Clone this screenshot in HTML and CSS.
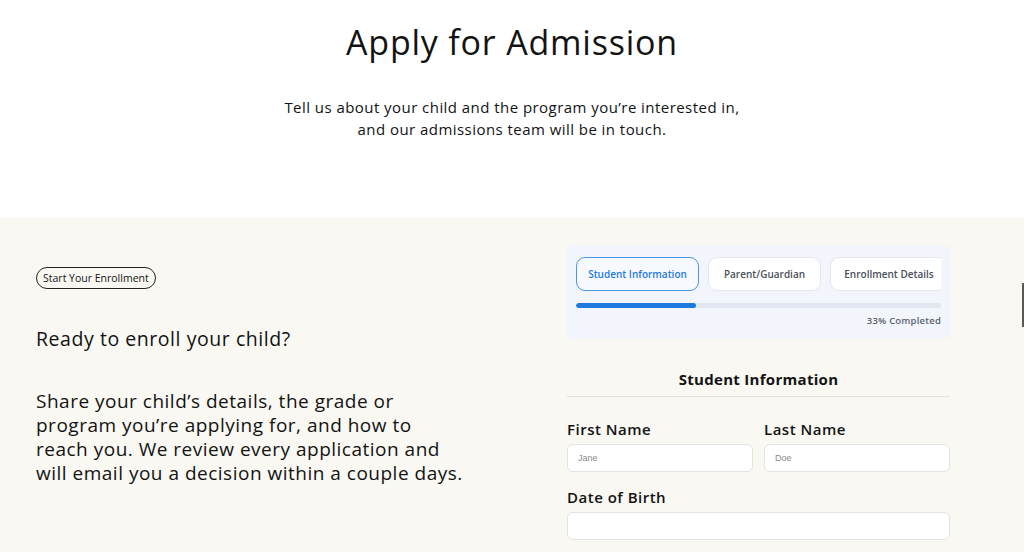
FILE: index.html
```html
<!DOCTYPE html>
<html>
<head>
<meta charset="utf-8">
<link rel="stylesheet" href="styles.css">
</head>
<body>
<header class="hero">
  <h1 class="hero-title">Apply for Admission</h1>
  <p class="hero-sub">Tell us about your child and the program you’re interested in,<br>and our admissions team will be in touch.</p>
</header>
<section class="enroll">
  <div class="intro">
    <span class="pill">Start Your Enrollment</span>
    <h2 class="intro-title">Ready to enroll your child?</h2>
    <p class="intro-text">Share your child’s details, the grade or program you’re applying for, and how to reach you. We review every application and will email you a decision within a couple days.</p>
  </div>
  <div class="form-col">
    <div class="steps">
      <div class="tabs">
        <button class="tab active">Student Information</button>
        <button class="tab">Parent/Guardian</button>
        <button class="tab">Enrollment Details</button>
      </div>
      <div class="progress"><div class="progress-fill" style="width:33%"></div></div>
      <div class="progress-label">33% Completed</div>
    </div>
    <h3 class="form-title">Student Information</h3>
    <div class="row">
      <label class="field">
        <span class="label">First Name</span>
        <input class="input" placeholder="Jane">
      </label>
      <label class="field">
        <span class="label">Last Name</span>
        <input class="input" placeholder="Doe">
      </label>
    </div>
    <label class="field">
      <span class="label">Date of Birth</span>
      <input class="input">
    </label>
  </div>
  <div class="edge-tab"></div>
</section>
</body>
</html>
```
FILE: styles.css
```css
* { box-sizing: border-box; }
html, body { margin: 0; padding: 0; }
body {
  font-family: "Open Sans", "Noto Sans", sans-serif;
  color: #131313;
  background: #ffffff;
  overflow: hidden;
  width: 1024px;
  height: 552px;
}
.hero {
  height: 218px;
  text-align: center;
  padding-top: 20px;
}
.hero-title {
  margin: 0;
  font-size: 34px;
  font-weight: 400;
  line-height: 44px;
  letter-spacing: 0.8px;
}
.hero-sub {
  margin: 32px 0 0;
  font-size: 15px;
  line-height: 22px;
  letter-spacing: 0.45px;
}
.enroll {
  position: relative;
  background: #f9f8f2;
  height: 334px;
  display: flex;
  padding: 27px 0 0 36px;
}
.intro {
  width: 480px;
  padding-top: 20px;
}
.pill {
  display: inline-block;
  border: 1px solid #222;
  border-radius: 999px;
  font-size: 10.5px;
  line-height: 20px;
  padding: 0 6px;
  font-weight: 500;
}
.intro-title {
  margin: 37px 0 0;
  font-size: 19.5px;
  font-weight: 500;
  line-height: 26px;
  letter-spacing: 0.55px;
}
.intro-text {
  margin: 37px 0 0;
  width: 432px;
  font-size: 19px;
  line-height: 24px;
  letter-spacing: 0.5px;
}
.form-col {
  margin-left: 51px;
  width: 383px;
}
.steps {
  background: #f2f5fb;
  border-radius: 8px;
  padding: 12px 10px 12px 10px;
  width: 385px;
  margin-left: -1px;
}
.tabs {
  display: flex;
  gap: 9px;
  overflow: hidden;
}
.tab {
  flex: none;
  height: 34px;
  padding: 0 10px;
  border: 1px solid #e3e6ee;
  background: #fff;
  border-radius: 9px;
  font-family: inherit;
  font-size: 10px;
  font-weight: 600;
  color: #4a4f5a;
}
.tab.active {
  color: #1f7ae0;
  border-color: #4a97ea;
  background: #f6f9fe;
}
.tab:nth-child(1) { width: 123px; }
.tab:nth-child(2) { width: 113px; }
.tab:nth-child(3) { width: 118px; }
.progress {
  margin-top: 12px;
  height: 5px;
  background: #e1e6f0;
  border-radius: 3px;
  overflow: hidden;
}
.progress-fill {
  height: 100%;
  background: #1f7ae0;
  border-radius: 3px;
}
.progress-label {
  text-align: right;
  font-size: 9.5px;
  font-weight: 600;
  color: #5c6270;
  margin-top: 6px;
  line-height: 13px;
  letter-spacing: 0.2px;
}
.form-title {
  margin: 30px 0 0;
  text-align: center;
  font-size: 15px;
  font-weight: 700;
  line-height: 20px;
  padding-bottom: 7px;
  border-bottom: 1px solid #e2e2de;
  letter-spacing: 0.3px;
}
.row {
  display: flex;
  gap: 11px;
  margin-top: 22px;
}
.field {
  display: flex;
  flex-direction: column;
  flex: 1;
}
.row + .field { margin-top: 15px; }
.label {
  font-size: 15px;
  font-weight: 600;
  line-height: 20px;
  letter-spacing: 0.5px;
}
.input {
  margin-top: 5px;
  height: 28px;
  border: 1px solid #e4e4e0;
  border-radius: 6px;
  background: #fff;
  padding: 0 10px;
  font-family: "Liberation Sans", sans-serif;
  font-size: 9px;
}
.input::placeholder { color: #8a8a8a; }
.edge-tab {
  position: absolute;
  right: 0;
  top: 65px;
  width: 2px;
  height: 44px;
  background: #5a5a5a;
}
```
